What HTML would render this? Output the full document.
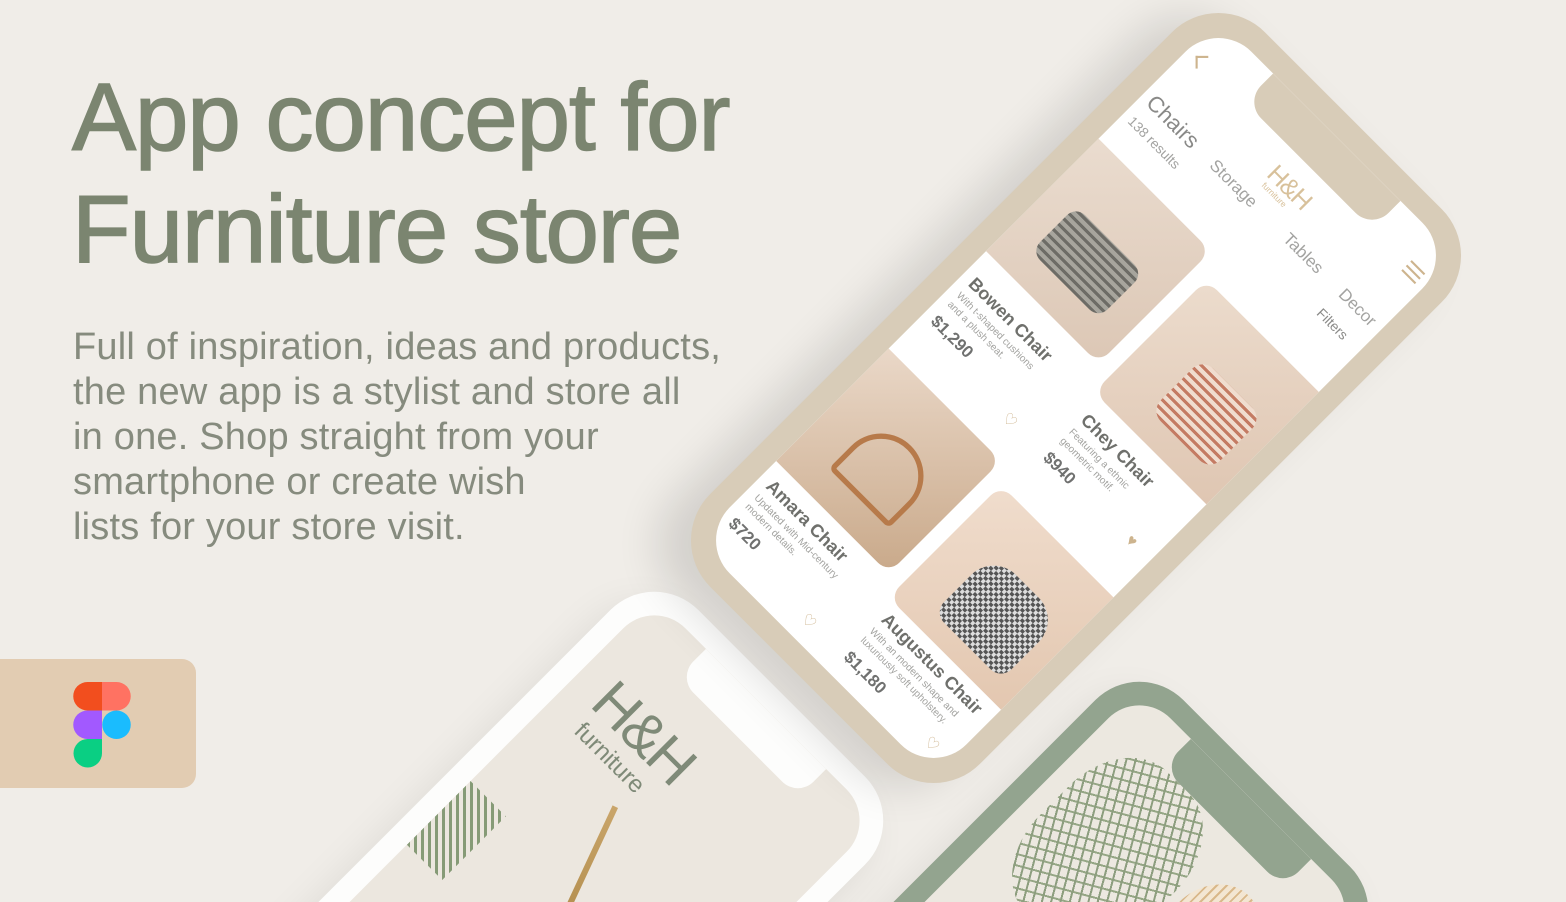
<!DOCTYPE html>
<html><head><meta charset="utf-8">
<style>
*{margin:0;padding:0;box-sizing:border-box}
html,body{width:1566px;height:902px;overflow:hidden}
body{background:#f0ede8;font-family:"Liberation Sans",sans-serif;position:relative}
#wrap{position:absolute;left:0;top:0;width:1566px;height:902px;overflow:hidden}
.title{position:absolute;left:72px;top:62px;color:#7b8570;font-size:96px;line-height:112px;-webkit-text-stroke:1.5px #7b8570;letter-spacing:-1px}
.body{position:absolute;left:73px;top:325px;color:#868b7e;font-size:38px;line-height:45px;letter-spacing:0.2px}
.badge{position:absolute;left:0;top:659px;width:196px;height:129px;background:#e2ccb2;border-radius:0 14px 14px 0}
.phone{position:absolute;width:360px;height:740px;border-radius:62px;transform:rotate(45deg)}
.scr{position:absolute;left:22px;top:22px;right:22px;bottom:22px;border-radius:44px;overflow:hidden}
.notch{position:absolute;left:73px;top:0;width:170px;height:40px;border-radius:0 0 22px 22px}
.img{position:absolute;border-radius:14px;overflow:hidden;background:#e9d5c5}
.nm{position:absolute;font-weight:bold;font-size:17px;color:#6f706c}
.ds{position:absolute;font-size:9.5px;color:#a3a3a0;line-height:12px;width:140px}
.pr{position:absolute;font-weight:bold;font-size:16px;color:#707170}
.ht{position:absolute;color:#cdb48e;font-size:15px}
</style></head><body>
<div id="wrap">
<div class="title">App concept for<br>Furniture store</div>
<div class="body">Full of inspiration, ideas and products,<br>the new app is a stylist and store all<br>in one. Shop straight from your<br>smartphone or create wish<br>lists for your store visit.</div>

<div class="badge">
<svg style="position:absolute;left:73px;top:23px" width="58" height="86" viewBox="0 0 58 86">
<path d="M14.5 0H29V28.5H14.5A14.25 14.25 0 0 1 14.5 0Z" fill="#f24e1e"/>
<path d="M29 0H43.5A14.25 14.25 0 0 1 43.5 28.5H29Z" fill="#ff7262"/>
<path d="M14.5 28.5H29V57H14.5A14.25 14.25 0 0 1 14.5 28.5Z" fill="#a259ff"/>
<circle cx="43.5" cy="42.75" r="14.25" fill="#1abcfe"/>
<path d="M14.5 57H29V71.25A14.25 14.25 0 1 1 14.5 57Z" fill="#0acf83"/>
</svg>
</div>

<!-- white phone -->
<div class="phone" style="left:340px;top:585px;background:#fdfdfc;box-shadow:0 20px 40px rgba(0,0,0,.08)">
 <div class="scr" style="background:#ece7df">
  <div class="notch" style="background:#fdfdfc"></div>
  <div style="position:absolute;left:30px;top:70px;color:#7f8a78;font-size:58px;letter-spacing:-2px">H&amp;H</div>
  <div style="position:absolute;left:38px;top:132px;color:#7f8a78;font-size:24px">furniture</div>
  <div style="position:absolute;left:150px;top:170px;width:6px;height:190px;background:linear-gradient(#c9a56a,#a8823f);transform:rotate(-20deg)"></div>
  <div style="position:absolute;left:100px;top:350px;width:90px;height:110px;border-radius:30px 30px 10px 10px;background:radial-gradient(circle at 40% 40%,#f5dfb8,#c99a58);opacity:.9"></div>
  <div style="position:absolute;left:0;top:260px;width:50px;height:90px;background:repeating-linear-gradient(45deg,#5b7a4a 0 3px,transparent 3px 7px);opacity:.7"></div>
 </div>
</div>

<!-- green phone -->
<div class="phone" style="left:825px;top:675px;background:#93a48f;box-shadow:0 20px 40px rgba(0,0,0,.08)">
 <div class="scr" style="background:#ece8e0">
  <div class="notch" style="background:#93a48f"></div>
  <div style="position:absolute;left:20px;top:40px;width:150px;height:200px;background:repeating-linear-gradient(60deg,#4f6d3e 0 2px,transparent 2px 9px),repeating-linear-gradient(-30deg,#5d7b48 0 2px,transparent 2px 11px);opacity:.6;border-radius:40%"></div>
  <div style="position:absolute;left:180px;top:70px;width:90px;height:110px;border-radius:50%;background:repeating-linear-gradient(90deg,#d9b88a 0 2px,transparent 2px 7px),#f3e6d2"></div>
  <div style="position:absolute;left:60px;top:250px;color:#7b8570;font-size:44px">Cre</div>
 </div>
</div>

<!-- main phone -->
<div class="phone" style="left:896px;top:28px;transform:rotate(45deg) scale(1.06);background:#d8ccb8;box-shadow:-20px 25px 40px rgba(0,0,0,.12)">
 <div class="scr" style="background:#fff">
  <div class="notch" style="background:#d8ccb8;height:38px"></div>
  <div style="position:absolute;left:12px;top:34px;width:12px;height:12px;border-left:2px solid #cdb48e;border-top:2px solid #cdb48e;transform:rotate(-45deg)"></div>
  <div style="position:absolute;left:290px;top:32px;width:18px">
   <div style="height:2px;background:#cdb48e;margin-bottom:4px"></div><div style="height:2px;background:#cdb48e;margin-bottom:4px"></div><div style="height:2px;background:#cdb48e"></div></div>
  <div style="position:absolute;left:136px;top:52px;color:#d8c19b;font-size:24px;letter-spacing:-1px">H&amp;H</div>
  <div style="position:absolute;left:140px;top:76px;color:#d8c19b;font-size:8px">furniture</div>
  <div style="position:absolute;left:8px;top:88px;color:#8a8a88;font-size:21px">Chairs</div>
  <div style="position:absolute;left:92px;top:92px;color:#a3a3a1;font-size:16px">Storage</div>
  <div style="position:absolute;left:190px;top:92px;color:#a3a3a1;font-size:16px">Tables</div>
  <div style="position:absolute;left:264px;top:92px;color:#a3a3a1;font-size:16px">Decor</div>
  <div style="position:absolute;left:8px;top:118px;color:#a3a3a1;font-size:13px">138 results</div>
  <div style="position:absolute;left:262px;top:120px;color:#8a8a88;font-size:13px">Filters</div>

  <div class="img" style="left:0;top:160px;width:150px;height:150px;border-radius:0 14px 14px 0;background:linear-gradient(135deg,#eadccf,#dcc7b5)">
   <div style="position:absolute;left:30px;top:60px;width:90px;height:60px;border-radius:12px;background:repeating-linear-gradient(0deg,#6d6c66 0 3px,#a7a59d 3px 7px)"></div></div>
  <div class="nm" style="left:10px;top:330px">Bowen Chair</div>
  <div class="ds" style="left:10px;top:352px">With t-shaped cushions<br>and a plush seat.</div>
  <div class="pr" style="left:10px;top:382px">$1,290</div>
  <div class="ht" style="left:122px;top:398px">♡</div>

  <div class="img" style="left:166px;top:182px;width:150px;height:150px;border-radius:14px 0 0 14px;background:linear-gradient(135deg,#ecdccd,#dfc6b2)">
   <div style="position:absolute;left:50px;top:55px;width:80px;height:70px;border-radius:14px;background:repeating-linear-gradient(0deg,#c47b63 0 3px,#f0ddcf 3px 7px)"></div></div>
  <div class="nm" style="left:176px;top:346px">Chey Chair</div>
  <div class="ds" style="left:176px;top:368px">Featuring a ethnic<br>geometric motif.</div>
  <div class="pr" style="left:176px;top:398px">$940</div>
  <div class="ht" style="left:286px;top:398px">♥</div>

  <div class="img" style="left:0;top:440px;width:150px;height:150px;border-radius:0 14px 14px 0;background:linear-gradient(135deg,#ead8c8,#c9a98a)">
   <div style="position:absolute;left:40px;top:50px;width:80px;height:70px;border:5px solid #b77a4a;border-radius:40px 40px 6px 6px"></div></div>
  <div class="nm" style="left:10px;top:600px">Amara Chair</div>
  <div class="ds" style="left:10px;top:622px">Updated with Mid-century<br>modern details.</div>
  <div class="pr" style="left:10px;top:652px">$720</div>
  <div class="ht" style="left:122px;top:666px">♡</div>

  <div class="img" style="left:166px;top:456px;width:150px;height:150px;border-radius:14px 0 0 14px;background:linear-gradient(135deg,#f0ddcd,#e3c7b0)">
   <div style="position:absolute;left:40px;top:50px;width:90px;height:80px;border-radius:30px 30px 14px 14px;background:repeating-conic-gradient(#555 0 25%,#ddd 0 50%) 0 0/7px 7px"></div></div>
  <div class="nm" style="left:176px;top:612px">Augustus Chair</div>
  <div class="ds" style="left:176px;top:634px">With an modern shape and<br>luxuriously soft upholstery.</div>
  <div class="pr" style="left:176px;top:664px">$1,180</div>
  <div class="ht" style="left:286px;top:666px">♡</div>
 </div>
</div>
</div>
</body></html>
